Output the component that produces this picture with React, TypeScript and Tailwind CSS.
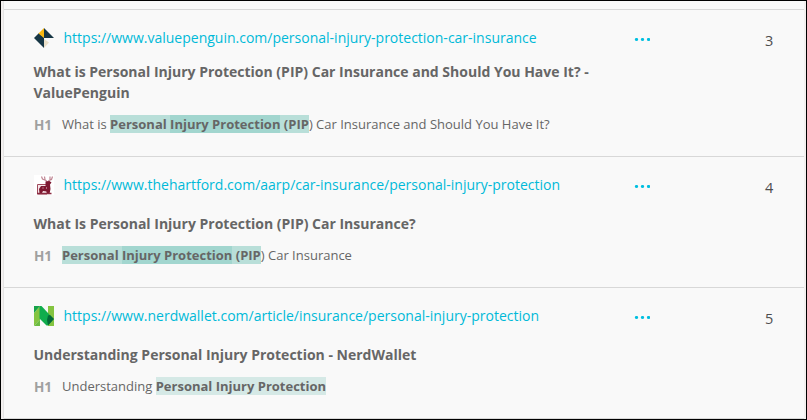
import { ReactNode } from "react";

const PenguinIcon = () => (
  <svg width="20" height="20" viewBox="0 0 20 20">
    <path d="M0 10L5 5L10 9.500V20Z" fill="#173645" />
    <path d="M10 0V10L4.500 5.500Z" fill="#f9b812" />
    <path d="M10 0L20 10H10Z" fill="#173645" />
    <path d="M10 11L15 14.500L10 20Z" fill="#eadfc8" />
  </svg>
);

const HartfordIcon = () => (
  <svg width="20" height="20" viewBox="0 0 20 20">
    <rect width="20" height="20" fill="#fff" />
    <path d="M3.500 9.500H13V19H3.500Z" fill="#f6e6e9" stroke="#a04a5d" />
    <path
      d="M7.500 1.500L8.500 4L12 5.500L13.500 7.500L15 5.500L17.500 4.500L18.500 1.500M10.500 1.500L11 4.500M16 1.500V4.500"
      fill="none"
      stroke="#c08794"
      strokeWidth="1.200"
    />
    <path
      d="M11.500 6.500L15.500 6L17.500 7.500L16 9.500L16.500 14L15.500 19H13.500L12.500 16.500L9 16L8 18H5.500L5 14L7 11L11.500 11Z"
      fill="#7d1730"
    />
    <path d="M3 18.500H17.500" stroke="#8a2a40" strokeWidth="1.500" />
    <path d="M8 13H10M12.500 12V14" stroke="#b06a7a" />
  </svg>
);

const NerdIcon = () => (
  <svg width="20" height="20" viewBox="0 0 20 20">
    <path d="M0 7L6 0V13.500L0 20Z" fill="#84c441" />
    <path d="M0 0H6L0 7Z" fill="#16a34a" />
    <path d="M0 20L6 13.500V20Z" fill="#6cbb42" />
    <path d="M14 0H20V20H14Z" fill="#84c441" />
    <path d="M5.500 0H7.500L14 7L19.500 13L14 19.500H12.500L5.500 12.500Z" fill="#10ad4d" />
    <path d="M14 9.500L16 9L20 13L14 19.500L13 14Z" fill="#046a38" />
  </svg>
);

const Mark = ({ children }: { children: ReactNode }) => (
  <b className="inline-block h-[18px] bg-[#b9dfd9] leading-[18px] whitespace-pre">{children}</b>
);

const Strong = ({ children }: { children: ReactNode }) => (
  <span className="inline-block h-[18px] bg-[#a2d6cf]">{children}</span>
);

type RowProps = {
  icon: ReactNode;
  url: string;
  title: ReactNode;
  heading: ReactNode;
  position: number;
  tall?: boolean;
};

const Row = ({ icon, url, title, heading, position, tall }: RowProps) => (
  <div
    className={
      "flex border-b border-[#d8d8d8] pt-[18px] pl-[30px] " + (tall ? "h-[147px]" : "h-[131px]")
    }
  >
    <div className="w-[600px] shrink-0">
      <div className="flex h-5 items-center gap-[9.5px]">
        {icon}
        <a className="text-[14px] leading-5 whitespace-nowrap text-[#00b9d8]">{url}</a>
      </div>
      <h2
        className={
          "-ml-[0.5px] text-[14px] leading-[21px] font-bold whitespace-nowrap text-[#666] " +
          (tall ? "mt-[13px]" : "mt-[18px]")
        }
      >
        {title}
      </h2>
      <div className="mt-[12px] flex h-[18px] items-center">
        <span className="w-[28px] shrink-0 pt-px text-[13.5px] leading-[18px] font-bold text-[#a0a0a0]">H1</span>
        <p className="text-[13px] leading-[18px] whitespace-nowrap text-[#666]">{heading}</p>
      </div>
    </div>
    <svg width="16" height="4" className="mt-[10px] shrink-0" fill="#00bfe0">
      <circle cx="2.500" cy="1.500" r="1.600" />
      <circle cx="8.500" cy="1.500" r="1.600" />
      <circle cx="14.500" cy="1.500" r="1.600" />
    </svg>
    <span className="mt-[3px] ml-[115px] text-[14.5px] leading-5 text-[#4d4d4d]">{position}</span>
  </div>
);

export default function App() {
  return (
    <div className="h-[420px] w-[807px] overflow-hidden border border-black bg-[#f3f0ef] pr-[2px] pl-[2px] font-['Open_Sans',sans-serif]">
      <div className="h-[418px] border-l border-[#e4e4e4] bg-[#f9f9f9]">
        <div className="h-[9px] border-b border-[#d8d8d8]" />
        <Row
          tall
          icon={<PenguinIcon />}
          url="https://www.valuepenguin.com/personal-injury-protection-car-insurance"
          title={
            <>
              What is Personal Injury Protection (PIP) Car Insurance and Should You Have It? -<br />
              ValuePenguin
            </>
          }
          heading={
            <>
              What is <Mark>Personal <Strong>Injury Protection</Strong> (PIP</Mark>) Car Insurance and Should You
              Have It?
            </>
          }
          position={3}
        />
        <Row
          icon={<HartfordIcon />}
          url="https://www.thehartford.com/aarp/car-insurance/personal-injury-protection"
          title="What Is Personal Injury Protection (PIP) Car Insurance?"
          heading={
            <>
              <Mark>Personal <Strong>Injury Protection</Strong> (PIP</Mark>) Car Insurance
            </>
          }
          position={4}
        />
        <Row
          icon={<NerdIcon />}
          url="https://www.nerdwallet.com/article/insurance/personal-injury-protection"
          title="Understanding Personal Injury Protection - NerdWallet"
          heading={
            <>
              Understanding <b className="inline-block h-[18px] bg-[#d5e9e6]">Personal Injury Protection</b>
            </>
          }
          position={5}
        />
      </div>
    </div>
  );
}
